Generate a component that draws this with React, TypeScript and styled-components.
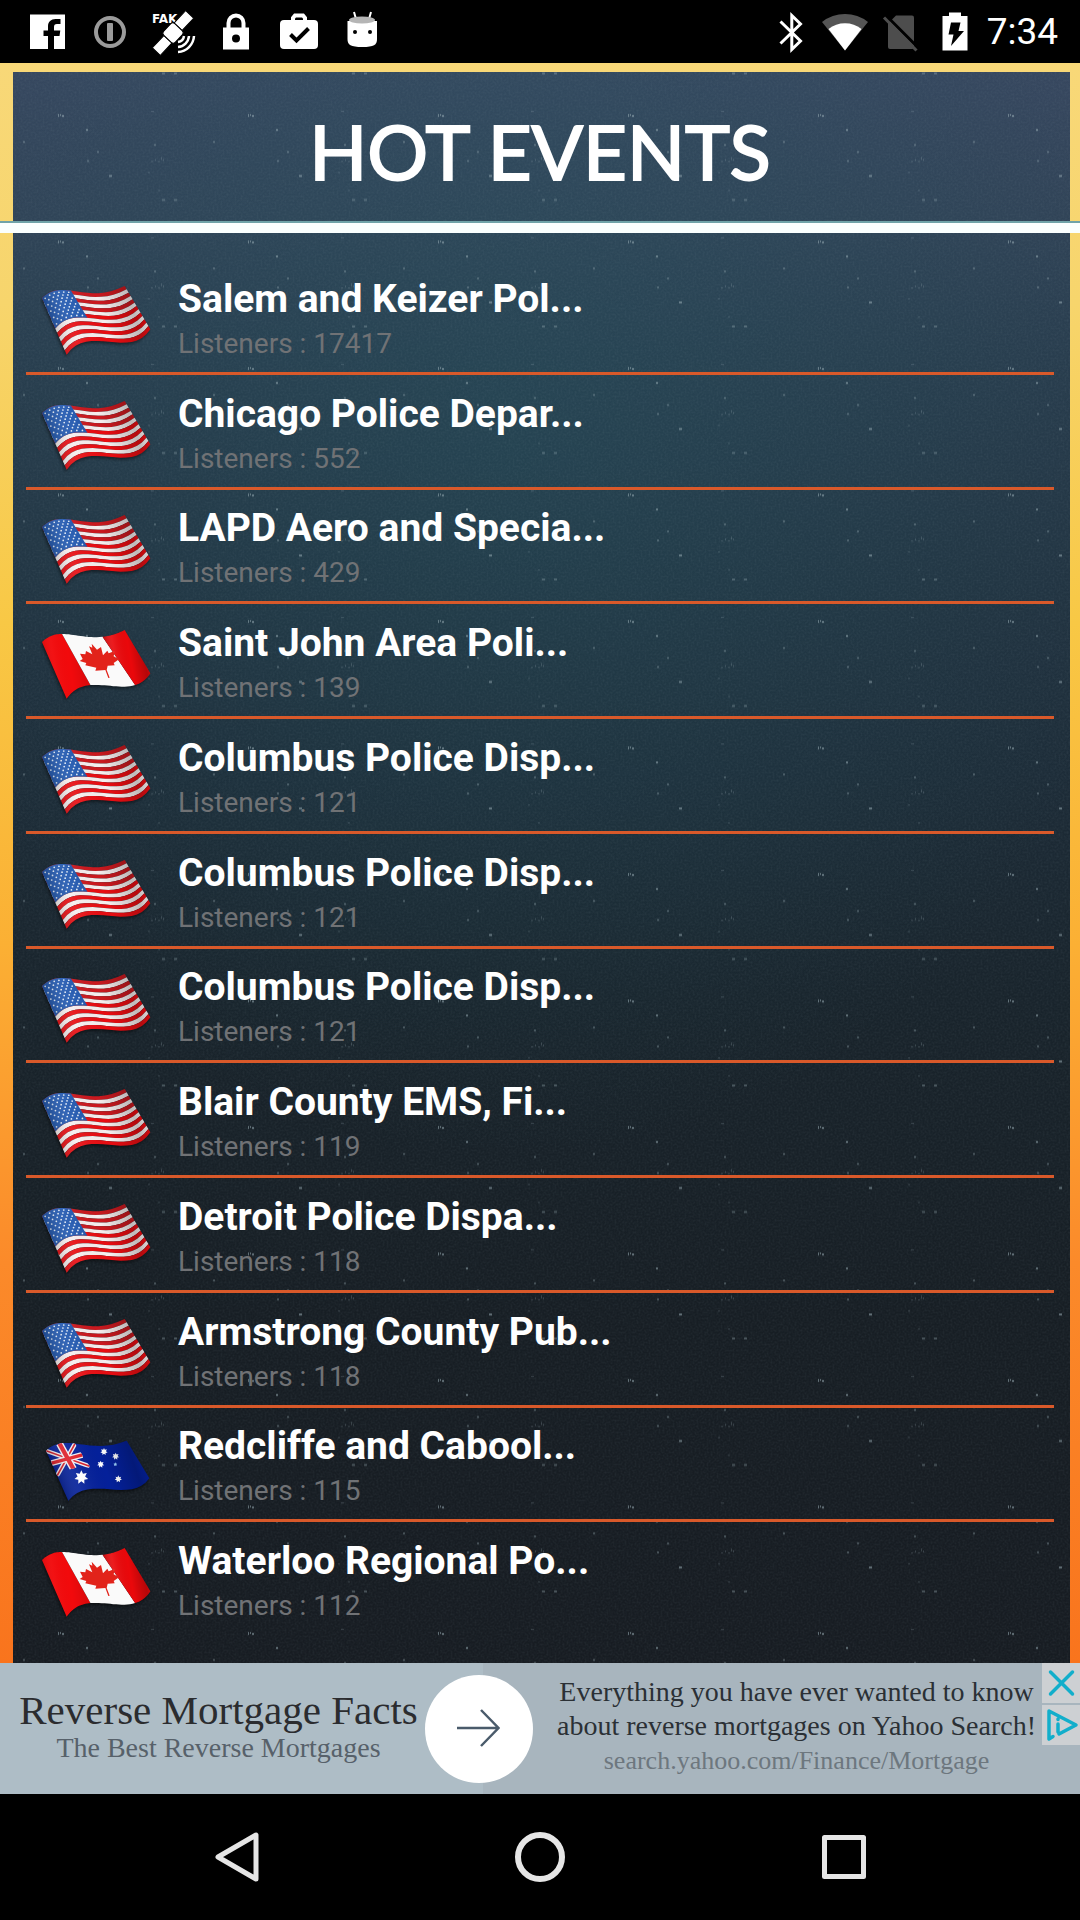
import React from "react";
import styled, { createGlobalStyle } from "styled-components";

const GlobalStyle = createGlobalStyle`
  * { box-sizing: border-box; }
  body { margin: 0; background: #000; }
  button { appearance: none; border: 0; padding: 0; margin: 0; background: none; cursor: pointer; }
  svg { display: block; }
`;

const Page = styled.div`
  min-height: 100vh;
  display: flex;
  flex-direction: column;
  font-family: Roboto, "Liberation Sans", sans-serif;
  color: #fff;
`;

const StatusBar = styled.div`
  height: 63px;
  flex: none;
  display: flex;
  align-items: center;
  justify-content: space-between;
  padding: 0 22px 0 24px;
  background: #000;
`;

const IconGroup = styled.div<{ $gap: number }>`
  display: flex;
  align-items: center;
  gap: ${(p) => p.$gap}px;
`;

const Clock = styled.time`
  font-size: 37px;
  line-height: 48px;
`;

const Frame = styled.main`
  position: relative;
  flex: 1;
  display: flex;
  flex-direction: column;
  background: linear-gradient(180deg, #f8d878 0%, #f7d56c 15%, #f8c845 35%, #fbb034 55%, #fb8a2a 75%, #f9741d 100%);
`;

const Backdrop = styled.svg`
  position: absolute;
  inset: 9px 10px 0 13px;
  width: calc(100% - 23px);
  height: calc(100% - 9px);
  background:
    radial-gradient(ellipse 62% 46% at 47% 22%, rgba(36, 84, 96, 0.4), rgba(36, 84, 96, 0) 100%),
    linear-gradient(180deg, #37475f 0%, #314357 9%, #293c4d 18%, #223341 32%, #1d2c38 44%, #19242c 58%, #171e24 78%, #171c22 100%);
`;

const Header = styled.header`
  position: relative;
  height: 170px;
  flex: none;
  display: flex;
  align-items: center;
  justify-content: center;
  border-bottom: 10px solid #fafffe;
  box-shadow: inset 0 -2px 0 #6fa3a8;
`;

const Title = styled.h1`
  margin: 0;
  padding-top: 16px;
  font-family: Lato, "Liberation Sans", sans-serif;
  font-weight: 400;
  font-size: 76px;
  line-height: 92px;
  -webkit-text-stroke: 2px #fff;
  stroke-linejoin: round;
`;

const EventList = styled.ul`
  position: relative;
  flex: 1;
  display: flex;
  flex-direction: column;
  list-style: none;
  margin: 0;
  padding: 27px 26px 26px;
`;

const EventItem = styled.li`
  flex: 1;
  display: flex;
  border-bottom: 3px solid #d9592a;
  &:last-child { border-bottom-color: transparent; }
`;

const EventLink = styled.a`
  flex: 1;
  display: flex;
  align-items: center;
  gap: 24px;
  padding: 8px 14px 0;
  color: inherit;
  text-decoration: none;
`;

const FlagSvg = styled.svg`
  width: 114px;
  height: 76px;
  flex: none;
`;

const EventText = styled.div`
  display: flex;
  flex-direction: column;
`;

const EventName = styled.span`
  font-size: 39px;
  font-weight: 700;
  line-height: 48px;
  white-space: nowrap;
`;

const Listeners = styled.span`
  font-size: 28px;
  line-height: 42px;
  color: #707275;
`;

const Ad = styled.aside`
  flex: none;
  height: 131px;
  display: grid;
  grid-template-columns: minmax(0, 425fr) 108px minmax(0, 509fr) 38px;
  align-items: center;
  background: linear-gradient(90deg, #aebdc6 44.7%, #a8b5be 44.7%);
  font-family: "Liberation Serif", serif;
`;

const AdHeading = styled.a`
  display: flex;
  flex-direction: column;
  align-items: center;
  padding-left: 12px;
  padding-bottom: 4px;
  text-decoration: none;
  white-space: nowrap;
`;

const AdTitle = styled.strong`
  font-weight: 400;
  font-size: 41px;
  line-height: 42px;
  color: #2b2c2f;
`;

const AdSubtitle = styled.span`
  font-size: 28px;
  line-height: 34px;
  color: #57616a;
`;

const GoButton = styled.button`
  width: 108px;
  height: 108px;
  border-radius: 50%;
  background: #fff;
  display: grid;
  place-items: center;
`;

const AdCopy = styled.a`
  padding-left: 18px;
  padding-bottom: 4px;
  text-align: center;
  text-decoration: none;
  white-space: nowrap;
  font-size: 28px;
  line-height: 34px;
  color: #2b3035;
`;

const AdLine = styled.span`
  display: block;
`;

const AdUrl = styled.span`
  display: block;
  font-size: 26px;
  line-height: 36px;
  color: #6d777e;
`;

const AdControls = styled.div`
  align-self: start;
  display: flex;
  flex-direction: column;
  gap: 2px;
`;

const AdControl = styled.button`
  width: 38px;
  height: 40px;
  background: #cdd0d3;
`;

const NavBar = styled.nav`
  flex: none;
  height: 126px;
  background: #000;
  display: flex;
  align-items: center;
  justify-content: center;
  gap: 240px;
`;

const NavButton = styled.button`
  width: 64px;
  height: 64px;
`;

/* ---------- flags ---------- */

type Pt = [number, number];
type Edge = [Pt, Pt, Pt, Pt];

const bez = (e: Edge, t: number): Pt => {
  const s = 1 - t;
  const k = [s * s * s, 3 * s * s * t, 3 * s * t * t, t * t * t];
  return [0, 1].map((i) => e.reduce((sum, p, n) => sum + k[n] * p[i], 0)) as Pt;
};

const cloth = (top: Edge, bottom: Edge) => {
  const at = (u: number, v: number): Pt => {
    const a = bez(top, u);
    const b = bez(bottom, u);
    return [a[0] + (b[0] - a[0]) * v, a[1] + (b[1] - a[1]) * v];
  };
  const patch = (u0: number, u1: number, v0: number, v1: number) => {
    const pts: Pt[] = [];
    for (let i = 0; i <= 16; i++) pts.push(at(u0 + ((u1 - u0) * i) / 16, v0));
    for (let i = 16; i >= 0; i--) pts.push(at(u0 + ((u1 - u0) * i) / 16, v1));
    return pts.map((p) => `${p[0].toFixed(1)},${p[1].toFixed(1)}`).join(" ");
  };
  return { at, patch };
};

const wide = cloth(
  [[66, 90], [130, 28], [200, 112], [314, 54]],
  [[140, 260], [205, 165], [330, 277], [391, 184]]
);
const slim = cloth(
  [[78, 107], [135, 50], [210, 122], [320, 77]],
  [[145, 257], [210, 175], [330, 270], [388, 190]]
);

const star = (cx: number, cy: number, r: number, n = 7) =>
  Array.from({ length: n * 2 }, (_, i) => {
    const a = (Math.PI * i) / n - Math.PI / 2;
    const q = i % 2 ? r * 0.55 : r;
    return `${(cx + q * Math.cos(a)).toFixed(1)},${(cy + q * Math.sin(a)).toFixed(1)}`;
  }).join(" ");

const FlagDefs = () => (
  <defs>
    <linearGradient id="fold" x1="0" y1="0.2" x2="1" y2="0">
      <stop offset="0" stopColor="#000" stopOpacity="0.22" />
      <stop offset="0.2" stopColor="#fff" stopOpacity="0.08" />
      <stop offset="0.5" stopColor="#000" stopOpacity="0" />
      <stop offset="0.78" stopColor="#000" stopOpacity="0.22" />
      <stop offset="0.93" stopColor="#000" stopOpacity="0.04" />
      <stop offset="1" stopColor="#000" stopOpacity="0.12" />
    </linearGradient>
    <filter id="soft" x="-20%" y="-20%" width="140%" height="140%">
      <feGaussianBlur stdDeviation="5" />
    </filter>
  </defs>
);

const Usa = () => (
  <>
    <polygon points={wide.patch(0, 1, 0, 1)} fill="#000" opacity="0.45" filter="url(#soft)" transform="translate(-3 6)" />
    {Array.from({ length: 13 }, (_, i) => (
      <polygon key={i} points={wide.patch(0, 1, i / 13, (i + 1) / 13)} fill={i % 2 ? "#f6eeee" : i < 6 ? "#cb191f" : "#e80d12"} />
    ))}
    <polygon points={wide.patch(0, 0.42, 0, 7 / 13)} fill="#2158b0" />
    {Array.from({ length: 9 }, (_, r) =>
      Array.from({ length: r % 2 ? 5 : 6 }, (_, c) => {
        const p = wide.at(((c + (r % 2 ? 1 : 0.5)) / 6) * 0.41, ((r + 0.7) / 9.4) * (7 / 13));
        return <circle key={`${r}-${c}`} cx={p[0]} cy={p[1]} r="2.6" fill="#e4edf8" />;
      })
    )}
    <polygon points={wide.patch(0, 1, 0, 1)} fill="url(#fold)" />
  </>
);

const Canada = () => (
  <>
    <polygon points={wide.patch(0, 1, 0, 1)} fill="#000" opacity="0.45" filter="url(#soft)" transform="translate(-3 6)" />
    <polygon points={wide.patch(0, 0.3, 0, 1)} fill="#f20a0c" />
    <polygon points={wide.patch(0.3, 0.79, 0, 1)} fill="#fafafa" />
    <polygon points={wide.patch(0.79, 1, 0, 1)} fill="#ea080b" />
    <path
      d="M215 95 L231 113 L243 105 L249 130 L262 116 L266 124 L284 117 L281 133 L297 142 L281 153 L284 160 L263 161 L260 174 L269 197 L265 198 L256 174 L226 176 L229 167 L196 160 L199 153 L179 147 L188 141 L180 125 L196 127 L198 117 L217 127 L207 103 L217 107 Z"
      fill="#e2231a"
    />
    <polygon points={wide.patch(0, 0.3, 0, 1)} fill="url(#fold)" opacity="0.4" />
    <polygon points={wide.patch(0.79, 1, 0, 1)} fill="url(#fold)" />
  </>
);

const jack = (u0: number, v0: number, u1: number, v1: number) => {
  const a = slim.at(u0 * 0.44, v0 * 0.5);
  const b = slim.at(u1 * 0.44, v1 * 0.5);
  return { x1: a[0], y1: a[1], x2: b[0], y2: b[1] };
};

const Australia = () => (
  <>
    <polygon points={slim.patch(0, 1, 0, 1)} fill="#000" opacity="0.5" filter="url(#soft)" transform="translate(-3 6)" />
    <polygon points={slim.patch(0, 1, 0, 1)} fill="#04209a" />
    <clipPath id="canton">
      <polygon points={slim.patch(0, 0.44, 0, 0.54)} />
    </clipPath>
    <g clipPath="url(#canton)">
      <line {...jack(0, 0, 1, 1)} stroke="#f4f1f4" strokeWidth="13" />
      <line {...jack(0, 1, 1, 0)} stroke="#f4f1f4" strokeWidth="13" />
      <line {...jack(0, 0, 1, 1)} stroke="#d81f2a" strokeWidth="5" />
      <line {...jack(0, 1, 1, 0)} stroke="#d81f2a" strokeWidth="5" />
      <line {...jack(0.5, 0, 0.5, 1.1)} stroke="#f4f1f4" strokeWidth="21" />
      <line {...jack(0, 0.5, 1, 0.5)} stroke="#f4f1f4" strokeWidth="18" />
      <line {...jack(0.5, 0, 0.5, 1.1)} stroke="#e0202a" strokeWidth="13" />
      <line {...jack(0, 0.5, 1, 0.5)} stroke="#e0202a" strokeWidth="10" />
    </g>
    <polygon points={star(184, 187, 21)} fill="#fff" />
    <polygon points={star(252, 110, 11)} fill="#fff" />
    <polygon points={star(287, 124, 11)} fill="#fff" />
    <polygon points={star(242, 148, 11)} fill="#fff" />
    <polygon points={star(286, 148, 6, 5)} fill="#9fd4ff" />
    <polygon points={star(295, 192, 11)} fill="#fff" />
    <polygon points={slim.patch(0, 1, 0, 1)} fill="url(#fold)" />
  </>
);

const flags = {
  us: { label: "United States", Art: Usa },
  ca: { label: "Canada", Art: Canada },
  au: { label: "Australia", Art: Australia },
};

const Flag = ({ code }: { code: keyof typeof flags }) => {
  const { label, Art } = flags[code];
  return (
    <FlagSvg viewBox="60 42 342 228" role="img" aria-label={label}>
      <FlagDefs />
      <Art />
    </FlagSvg>
  );
};

/* ---------- status icons ---------- */

const StatusIcon = ({ children }: { children: React.ReactNode }) => (
  <svg width="48" height="48" viewBox="0 0 48 48" aria-hidden="true">
    {children}
  </svg>
);

const LeftIcons = () => (
  <IconGroup $gap={15}>
    <StatusIcon>
      <path fill="#fff" d="M6 6.500h35v34.500h-11v-13h5.500l.8-5.500h-6.300v-3.500c0-2 .8-3 3-3h3.500v-5h-5c-4.500 0-7.500 2.800-7.500 7.500v4h-4.500v5.500h4.500v13h-18z" />
    </StatusIcon>
    <StatusIcon>
      <circle cx="23" cy="24" r="14" fill="none" stroke="#9b9b9b" strokeWidth="4" />
      <rect x="20" y="15" width="6" height="18" rx="1" fill="#9b9b9b" />
    </StatusIcon>
    <StatusIcon>
      <text x="2" y="15" fontSize="12" fontWeight="700" fill="#fff" fontFamily="DejaVu Sans, sans-serif">FAK</text>
      <g transform="rotate(-47 23 25)" fill="#fff" stroke="#000">
        <rect x="-2" y="20" width="17" height="11" />
        <rect x="31" y="19" width="17" height="11" />
        <rect x="15" y="17" width="16" height="16" rx="3" />
      </g>
      <path d="M28 34a7 7 0 0 0 6-6M28 39a12 12 0 0 0 11-11M28 44a17 17 0 0 0 16-16" fill="none" stroke="#fff" strokeWidth="2.5" />
    </StatusIcon>
    <StatusIcon>
      <path fill="none" stroke="#fff" strokeWidth="4" d="M15.500 21v-6a7.500 7.500 0 0 1 15 0v6" />
      <path fill="#fff" fillRule="evenodd" d="M10 19.500h26v22h-26zM23 26.500a4 4 0 1 0 0 8 4 4 0 0 0 0-8z" />
    </StatusIcon>
    <StatusIcon>
      <path fill="none" stroke="#fff" strokeWidth="4" d="M17 14v-4l2-2.500h8l2 2.500v4" />
      <rect x="4" y="12" width="38" height="29" rx="4" fill="#fff" />
      <path fill="none" stroke="#000" strokeWidth="4" d="M14.500 26.500l6 6 12-12" />
    </StatusIcon>
    <StatusIcon>
      <path stroke="#fff" strokeWidth="2" d="M15 4l2 7M32 4l-2 7" />
      <path fill="#fff" d="M8.500 13h29.500v18c0 6-3 8-14.700 8s-14.800-2-14.800-8z" />
      <ellipse cx="23" cy="12" rx="13" ry="3.500" fill="#b5b5b5" />
      <circle cx="16" cy="24" r="2" />
      <circle cx="31" cy="24" r="2" />
    </StatusIcon>
  </IconGroup>
);

const RightIcons = () => (
  <IconGroup $gap={7}>
    <StatusIcon>
      <path fill="none" stroke="#fff" strokeWidth="3" d="M13.500 13.500l20 19.500-8.700 8.500v-34l8.700 8.500-20 19.500" />
    </StatusIcon>
    <StatusIcon>
      <path fill="#555" d="M0 14a37 37 0 0 1 46 0l-23 28.500z" />
      <path fill="#fff" d="M6.500 21a27 27 0 0 1 33 0l-16.500 21.500z" />
    </StatusIcon>
    <StatusIcon>
      <path fill="#4d4d4d" d="M19 7.500h16a2 2 0 0 1 2 2v29.500a2 2 0 0 1-2 2h-22a2 2 0 0 1-2-2v-23.500z" />
      <path stroke="#000" strokeWidth="3" d="M9.500 8l33 33" />
      <path stroke="#4d4d4d" strokeWidth="3" d="M7 9.500l32.500 33" />
    </StatusIcon>
    <StatusIcon>
      <path fill="#fff" d="M17 4.500h12v3.500h6.500v34.500h-25v-34.500h6.500z" />
      <path fill="#000" d="M19 14.500h9.500l-2 8.500h5.500l-13 15 2.500-11.500h-5z" />
    </StatusIcon>
    <Clock>7:34</Clock>
  </IconGroup>
);

const Stars = () => (
  <Backdrop aria-hidden="true">
    <defs>
      <pattern id="stars" x="-13" y="6" width="190" height="126.5" patternUnits="userSpaceOnUse">
        <g fill="#9db0b8">
          <g opacity="0.55">
            <rect x="58" y="36" width="1" height="3" />
            <rect x="60" y="36" width="1" height="2" />
            <rect x="62" y="37" width="2" height="2" />
            <rect x="86" y="51" width="2" height="2" />
            <rect x="109" y="97" width="3" height="2" />
          </g>
          <g opacity="0.35">
            <rect x="23" y="63" width="2" height="2" />
            <rect x="87" y="82" width="2" height="2" />
            <rect x="162" y="121" width="3" height="2" />
            <rect x="174" y="121" width="3" height="2" />
            <rect x="97" y="73" width="2" height="2" />
            <rect x="154" y="66" width="2" height="2" />
          </g>
          <g opacity="0.25">
            <rect x="151" y="33" width="3" height="1" />
            <rect x="151" y="83" width="2" height="1" />
            <rect x="155" y="81" width="1" height="2" />
            <rect x="158" y="83" width="2" height="1" />
            <rect x="161" y="79" width="1" height="3" />
            <rect x="163" y="81" width="1" height="2" />
            <rect x="158" y="112" width="2" height="1" />
            <rect x="148" y="94" width="2" height="1" />
          </g>
        </g>
      </pattern>
      <filter id="grain" x="0" y="0" width="100%" height="100%">
        <feTurbulence type="fractalNoise" baseFrequency="0.5" numOctaves="2" seed="4" />
        <feColorMatrix values="0 0 0 0 0.4  0 0 0 0 0.5  0 0 0 0 0.55  0.5 0 0 0 -0.18" />
      </filter>
    </defs>
    <rect width="100%" height="100%" filter="url(#grain)" opacity="0.3" />
    <rect width="100%" height="100%" fill="url(#stars)" />
  </Backdrop>
);

const events: { name: string; listeners: number; flag: keyof typeof flags }[] = [
  { name: "Salem and Keizer Pol...", listeners: 17417, flag: "us" },
  { name: "Chicago Police Depar...", listeners: 552, flag: "us" },
  { name: "LAPD Aero and Specia...", listeners: 429, flag: "us" },
  { name: "Saint John Area Poli...", listeners: 139, flag: "ca" },
  { name: "Columbus Police Disp...", listeners: 121, flag: "us" },
  { name: "Columbus Police Disp...", listeners: 121, flag: "us" },
  { name: "Columbus Police Disp...", listeners: 121, flag: "us" },
  { name: "Blair County EMS, Fi...", listeners: 119, flag: "us" },
  { name: "Detroit Police Dispa...", listeners: 118, flag: "us" },
  { name: "Armstrong County Pub...", listeners: 118, flag: "us" },
  { name: "Redcliffe and Cabool...", listeners: 115, flag: "au" },
  { name: "Waterloo Regional Po...", listeners: 112, flag: "ca" },
];

export default function App() {
  return (
    <Page>
      <GlobalStyle />
      <StatusBar>
        <LeftIcons />
        <RightIcons />
      </StatusBar>
      <Frame>
        <Stars />
        <Header>
          <Title>HOT EVENTS</Title>
        </Header>
        <EventList>
          {events.map((e, i) => (
            <EventItem key={i}>
              <EventLink href="#">
                <Flag code={e.flag} />
                <EventText>
                  <EventName>{e.name}</EventName>
                  <Listeners>Listeners : {e.listeners}</Listeners>
                </EventText>
              </EventLink>
            </EventItem>
          ))}
        </EventList>
      </Frame>
      <Ad>
        <AdHeading href="#">
          <AdTitle>Reverse Mortgage Facts</AdTitle>
          <AdSubtitle>The Best Reverse Mortgages</AdSubtitle>
        </AdHeading>
        <GoButton aria-label="Open">
          <svg width="48" height="48" viewBox="0 0 48 48" fill="none" stroke="#4a5b6b" strokeWidth="2.5">
            <path d="M2 23h41M26 5l17.500 18-17.500 18" />
          </svg>
        </GoButton>
        <AdCopy href="#">
          <AdLine>Everything you have ever wanted to know</AdLine>
          <AdLine>about reverse mortgages on Yahoo Search!</AdLine>
          <AdUrl>search.yahoo.com/Finance/Mortgage</AdUrl>
        </AdCopy>
        <AdControls>
          <AdControl aria-label="Close ad">
            <svg width="38" height="40" viewBox="0 0 38 40" fill="none" stroke="#12aecb" strokeWidth="3.5" strokeLinecap="round">
              <path d="M8.500 9l22 22M30.500 9l-22 22" />
            </svg>
          </AdControl>
          <AdControl aria-label="Ad choices">
            <svg width="38" height="40" viewBox="0 0 38 40" fill="none" stroke="#12aecb" strokeWidth="3.5" strokeLinecap="round" strokeLinejoin="round">
              <path d="M11 31.500l-4 2.500v-28l27 14-17 9M16 19v8M16 14v.5" />
            </svg>
          </AdControl>
        </AdControls>
      </Ad>
      <NavBar>
        <NavButton aria-label="Back">
          <svg width="64" height="64" viewBox="0 0 64 64" fill="none" stroke="#e6e6e6" strokeWidth="5" strokeLinejoin="round">
            <path d="M14 32l38-22v44z" />
          </svg>
        </NavButton>
        <NavButton aria-label="Home">
          <svg width="64" height="64" viewBox="0 0 64 64" fill="none" stroke="#e6e6e6" strokeWidth="6">
            <circle cx="32" cy="32" r="22" />
          </svg>
        </NavButton>
        <NavButton aria-label="Recent apps">
          <svg width="64" height="64" viewBox="0 0 64 64" fill="none" stroke="#e6e6e6" strokeWidth="5" strokeLinejoin="round">
            <rect x="12.500" y="12.500" width="39" height="39" />
          </svg>
        </NavButton>
      </NavBar>
    </Page>
  );
}
